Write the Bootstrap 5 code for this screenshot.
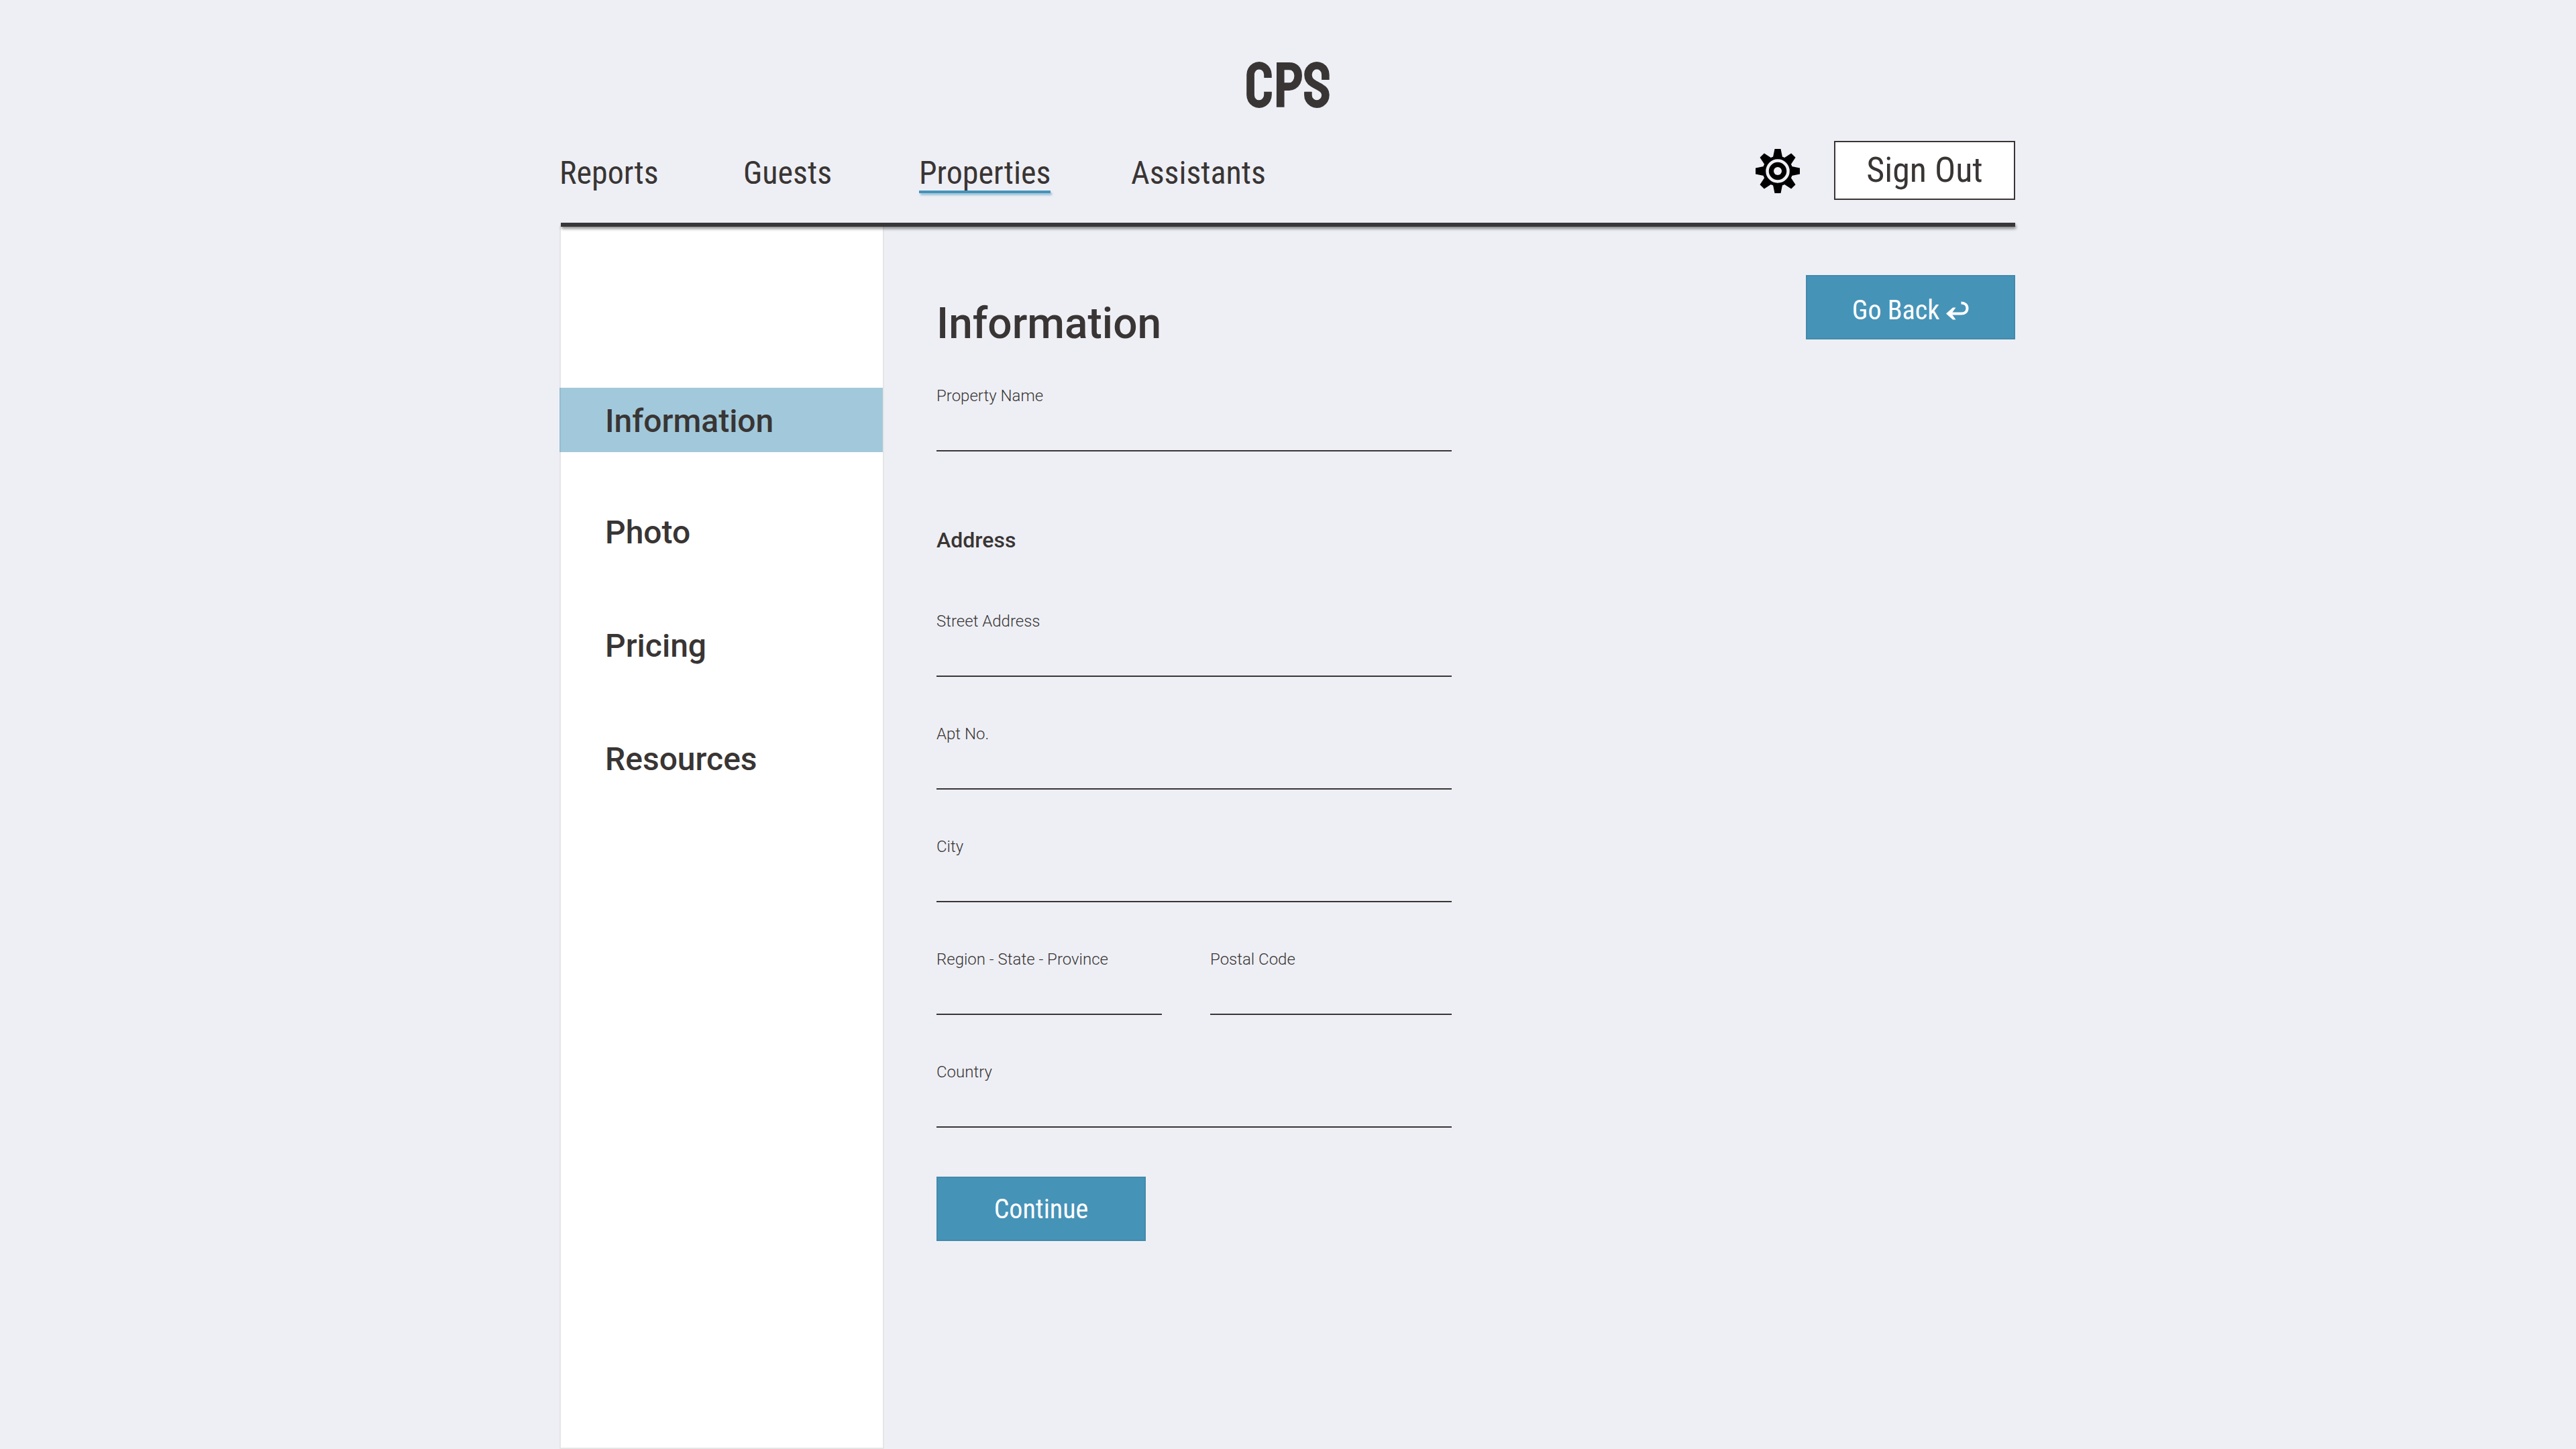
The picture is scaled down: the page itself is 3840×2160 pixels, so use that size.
<!DOCTYPE html>
<html lang="en">
<head>
<meta charset="utf-8">
<meta name="viewport" content="width=device-width, initial-scale=1">
<title>CPS – Property information</title>
<link rel="stylesheet" href="https://cdn.jsdelivr.net/npm/bootstrap@5.3.0/dist/css/bootstrap.min.css">
<style>
  :root { --ink: #393534; --brand: #4693b8; --page: #eeeff5; }
  body { background: var(--page); color: var(--ink); font-family: Roboto, "Open Sans", sans-serif; }
  .shell { max-width: 2168px; min-height: 100vh; }
  .condensed { font-family: "Roboto Condensed", "Roboto", sans-serif; font-weight: 400; }
  .site-head { padding-top: 81px; }
  .brand-name { font-family: Staatliches, "Roboto Condensed", sans-serif; font-size: 96px; line-height: 96px; margin-bottom: 33px; color: var(--ink); }
  .head-row { min-height: 88px; }
  .head-rule { height: 6px; margin: 34px 0 0; border: 0; opacity: 1; background: #393637; box-shadow: 1px 3px 4px rgba(0,0,0,.45); position: relative; }
  .main-nav { display: grid; grid-template-columns: 274px 262px 316px auto; justify-items: start; margin-left: -2px; }
  .main-nav .nav-link { padding: 12px 0 0; font-size: 48px; line-height: 52px; color: var(--ink); }
  .main-nav .nav-link::after { content: ""; display: block; height: 4px; }
  .main-nav .nav-link.active::after { background: var(--brand); box-shadow: 2px 3px 3px rgba(70,147,184,.5); }
  .head-tools { gap: 50px; }
  .gear-btn { width: 68px; height: 68px; }
  .btn { border-radius: 0; padding: 0; border-width: 2px; transition: none; }
  .btn-signout { width: 270px; height: 88px; font-size: 52px; line-height: 60px; background: #fff; border-color: var(--ink); color: var(--ink); }
  .btn-brand { width: 312px; height: 96px; padding-top: 2px; font-size: 40px; line-height: 48px; background: var(--brand); border-color: #4389ab; color: #fff; }
  .btn-icon { padding-top: 9px; gap: 10px; }
  .side { width: 484px; margin-left: -2px; padding-top: 240px; background: #fff; border: 2px solid #e5e5e5; border-top: 0; }
  .side .nav-link { margin: 73px 0 0 -2px; padding: 4px 66px 0 68px; font-size: 48px; line-height: 92px; font-weight: 500; color: var(--ink); }
  .side .nav-link.active { margin-top: 0; background: rgba(70,147,184,.5); }
  .side .nav-link.active + .nav-link { margin-top: 70px; }
  .content { padding: 72px 0 72px 78px; }
  .form-area { max-width: 768px; padding-top: 35px; }
  .form-area h1 { font-size: 64px; line-height: 76px; font-weight: 500; margin-bottom: 55px; }
  .form-area h2 { font-size: 32px; line-height: 38px; font-weight: 500; margin: 113px 0 88px; }
  .fields { gap: 71px; }
  .form-label { display: block; margin: 0; font-size: 24px; line-height: 28px; font-weight: 300; }
  .form-control, .form-control:focus { height: 69px; padding: 8px 0; font-size: 32px; border: 0; border-bottom: 2px solid #393534; border-radius: 0; background: transparent; box-shadow: none; transition: none; }
  .region-row { gap: 72px; }
  .region-cell { flex: 14 1 0; }
  .postal-cell { flex: 15 1 0; }
  .submit-row { padding-top: 73px; }
</style>
</head>
<body>
<div class="shell container-fluid p-0 d-flex flex-column">
  <header class="site-head">
    <div class="brand-name text-center">CPS</div>
    <div class="head-row d-flex align-items-center justify-content-between">
      <nav class="main-nav condensed" aria-label="Main">
        <a class="nav-link" href="#">Reports</a>
        <a class="nav-link" href="#">Guests</a>
        <a class="nav-link active" aria-current="page" href="#">Properties</a>
        <a class="nav-link" href="#">Assistants</a>
      </nav>
      <div class="head-tools d-flex align-items-center">
        <button type="button" class="btn gear-btn border-0" aria-label="Settings">
          <svg class="d-block" width="68" height="68" viewBox="-34 -35 68 68" aria-hidden="true">
            <path id="tooth" d="M-8-16 L-4.500-33 H4.500 L8-16 Z"/>
            <use href="#tooth" transform="rotate(90)"/><use href="#tooth" transform="rotate(180)"/><use href="#tooth" transform="rotate(270)"/>
            <use href="#tooth" transform="rotate(45)"/><use href="#tooth" transform="rotate(135)"/><use href="#tooth" transform="rotate(225)"/><use href="#tooth" transform="rotate(315)"/>
            <circle r="22.500"/>
            <circle r="15.500" fill="#000" stroke="#eeeff5" stroke-width="4.500"/>
            <circle r="6" fill="#eeeff5"/>
          </svg>
        </button>
        <button type="button" class="btn btn-signout condensed">Sign Out</button>
      </div>
    </div>
    <hr class="head-rule">
  </header>

  <div class="d-flex flex-grow-1">
    <aside class="side flex-shrink-0">
      <nav class="nav flex-column" aria-label="Property sections">
        <a class="nav-link active" aria-current="page" href="#">Information</a>
        <a class="nav-link" href="#">Photo</a>
        <a class="nav-link" href="#">Pricing</a>
        <a class="nav-link" href="#">Resources</a>
      </nav>
    </aside>

    <main class="content flex-grow-1 d-flex justify-content-between align-items-start">
      <form class="form-area flex-grow-1">
        <h1>Information</h1>
        <div>
          <label class="form-label" for="pname">Property Name</label>
          <input class="form-control" id="pname" type="text">
        </div>
        <h2>Address</h2>
        <div class="fields d-flex flex-column">
          <div>
            <label class="form-label" for="street">Street Address</label>
            <input class="form-control" id="street" type="text">
          </div>
          <div>
            <label class="form-label" for="apt">Apt No.</label>
            <input class="form-control" id="apt" type="text">
          </div>
          <div>
            <label class="form-label" for="city">City</label>
            <input class="form-control" id="city" type="text">
          </div>
          <div class="region-row d-flex">
            <div class="region-cell">
              <label class="form-label" for="region">Region - State - Province</label>
              <input class="form-control" id="region" type="text">
            </div>
            <div class="postal-cell">
              <label class="form-label" for="postal">Postal Code</label>
              <input class="form-control" id="postal" type="text">
            </div>
          </div>
          <div>
            <label class="form-label" for="country">Country</label>
            <input class="form-control" id="country" type="text">
          </div>
        </div>
        <div class="submit-row">
          <button type="submit" class="btn btn-brand condensed">Continue</button>
        </div>
      </form>
      <button type="button" class="btn btn-brand btn-icon condensed d-flex align-items-center justify-content-center">
        <span>Go Back</span>
        <svg width="34" height="28" viewBox="0 0 34 28" fill="none" stroke="#fff" aria-hidden="true">
          <path d="M22.500 2.500 C28 2.500 31.500 6 31.500 10.500 C31.500 15.500 28 18.500 22.500 18.500 H5" stroke-width="4"/>
          <path d="M0 18.500 L10 9.500 H14.500 L8 18.500 L14.500 27.500 H10 Z" fill="#fff" stroke="none"/>
        </svg>
      </button>
    </main>
  </div>
</div>
<script src="https://cdn.jsdelivr.net/npm/bootstrap@5.3.0/dist/js/bootstrap.bundle.min.js"></script>
</body>
</html>
